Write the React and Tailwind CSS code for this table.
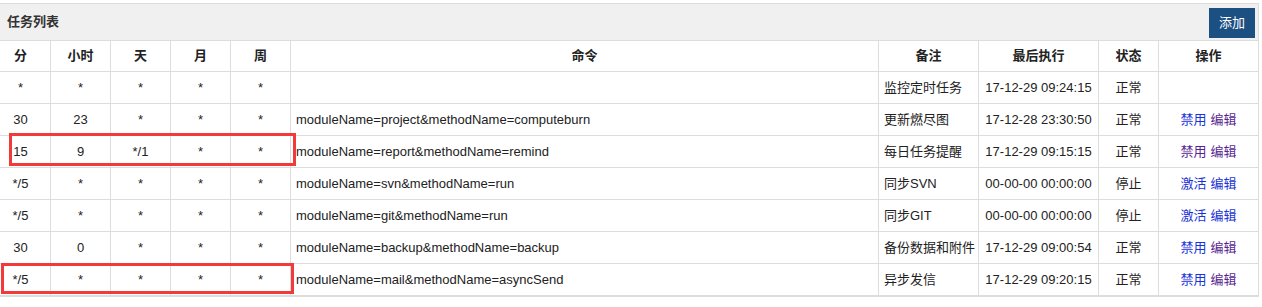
import React from "react";

const BLUE = "text-[#1a33d6]";
const PURPLE = "text-[#5a1f94]";

const tasks = [
  { m: "*", h: "*", d: "*", mon: "*", w: "*", cmd: "", note: "监控定时任务", last: "17-12-29 09:24:15", status: "正常", ops: null },
  { m: "30", h: "23", d: "*", mon: "*", w: "*", cmd: "moduleName=project&methodName=computeburn", note: "更新燃尽图", last: "17-12-28 23:30:50", status: "正常", ops: [["禁用", BLUE], ["编辑", PURPLE]] },
  { m: "15", h: "9", d: "*/1", mon: "*", w: "*", cmd: "moduleName=report&methodName=remind", note: "每日任务提醒", last: "17-12-29 09:15:15", status: "正常", ops: [["禁用", PURPLE], ["编辑", PURPLE]] },
  { m: "*/5", h: "*", d: "*", mon: "*", w: "*", cmd: "moduleName=svn&methodName=run", note: "同步SVN", last: "00-00-00 00:00:00", status: "停止", ops: [["激活", BLUE], ["编辑", BLUE]] },
  { m: "*/5", h: "*", d: "*", mon: "*", w: "*", cmd: "moduleName=git&methodName=run", note: "同步GIT", last: "00-00-00 00:00:00", status: "停止", ops: [["激活", BLUE], ["编辑", BLUE]] },
  { m: "30", h: "0", d: "*", mon: "*", w: "*", cmd: "moduleName=backup&methodName=backup", note: "备份数据和附件", last: "17-12-29 09:00:54", status: "正常", ops: [["禁用", BLUE], ["编辑", PURPLE]] },
  { m: "*/5", h: "*", d: "*", mon: "*", w: "*", cmd: "moduleName=mail&methodName=asyncSend", note: "异步发信", last: "17-12-29 09:20:15", status: "正常", ops: [["禁用", BLUE], ["编辑", PURPLE]] },
];

const headers = ["分", "小时", "天", "月", "周", "命令", "备注", "最后执行", "状态", "操作"];

const cell = "flex items-center whitespace-nowrap border-b border-[#ddd]";

const App = () => {
  return (
    <div
      className="min-h-screen bg-white pt-[3px] text-[13px] text-[#222]"
      style={{ fontFamily: '"Liberation Sans", Arial, "Noto Sans CJK SC", sans-serif' }}
    >
      <div className="-ml-[10px] w-[1269px] border border-[#ddd]">
        <div className="flex h-[37px] items-center justify-between border-b border-[#ddd] bg-[#f0f0f0] pl-[16px] pr-[3px]">
          <span className="font-bold text-[#333]">任务列表</span>
          <button
            type="button"
            className="mt-[2px] h-[30px] w-[46px] bg-[#1c4f82] text-[13px] text-white"
          >
            添加
          </button>
        </div>

        <div className="relative grid grid-cols-[60px_60px_60px_60px_60px_588px_100px_120px_60px_99px]">
          {headers.map((h, i) => (
            <div
              key={h}
              className={`${cell} h-[31px] justify-center font-bold ${i < 9 ? "border-r" : ""}`}
            >
              {h}
            </div>
          ))}

          {tasks.map((t, r) => (
            <React.Fragment key={r}>
              {[t.m, t.h, t.d, t.mon, t.w].map((v, i) => (
                <div key={i} className={`${cell} h-[32px] justify-center border-r`}>
                  {v}
                </div>
              ))}
              <div className={`${cell} h-[32px] border-r pl-[5px]`}>{t.cmd}</div>
              <div className={`${cell} h-[32px] overflow-visible border-r pl-[5px]`}>{t.note}</div>
              <div className={`${cell} h-[32px] justify-center border-r`}>{t.last}</div>
              <div className={`${cell} h-[32px] justify-center border-r`}>{t.status}</div>
              <div className={`${cell} h-[32px] justify-center gap-[4px]`}>
                {t.ops?.map(([label, color]) => (
                  <a key={label} href="#" className={color}>
                    {label}
                  </a>
                ))}
              </div>
            </React.Fragment>
          ))}

          <div className="pointer-events-none absolute left-[18px] top-[92px] h-[33px] w-[287px] border-[3px] border-[#f23a3a]" />
          <div className="pointer-events-none absolute left-[10px] top-[222px] h-[31px] w-[293px] border-[3px] border-[#f23a3a]" />
        </div>
      </div>
    </div>
  );
};

export default App;
